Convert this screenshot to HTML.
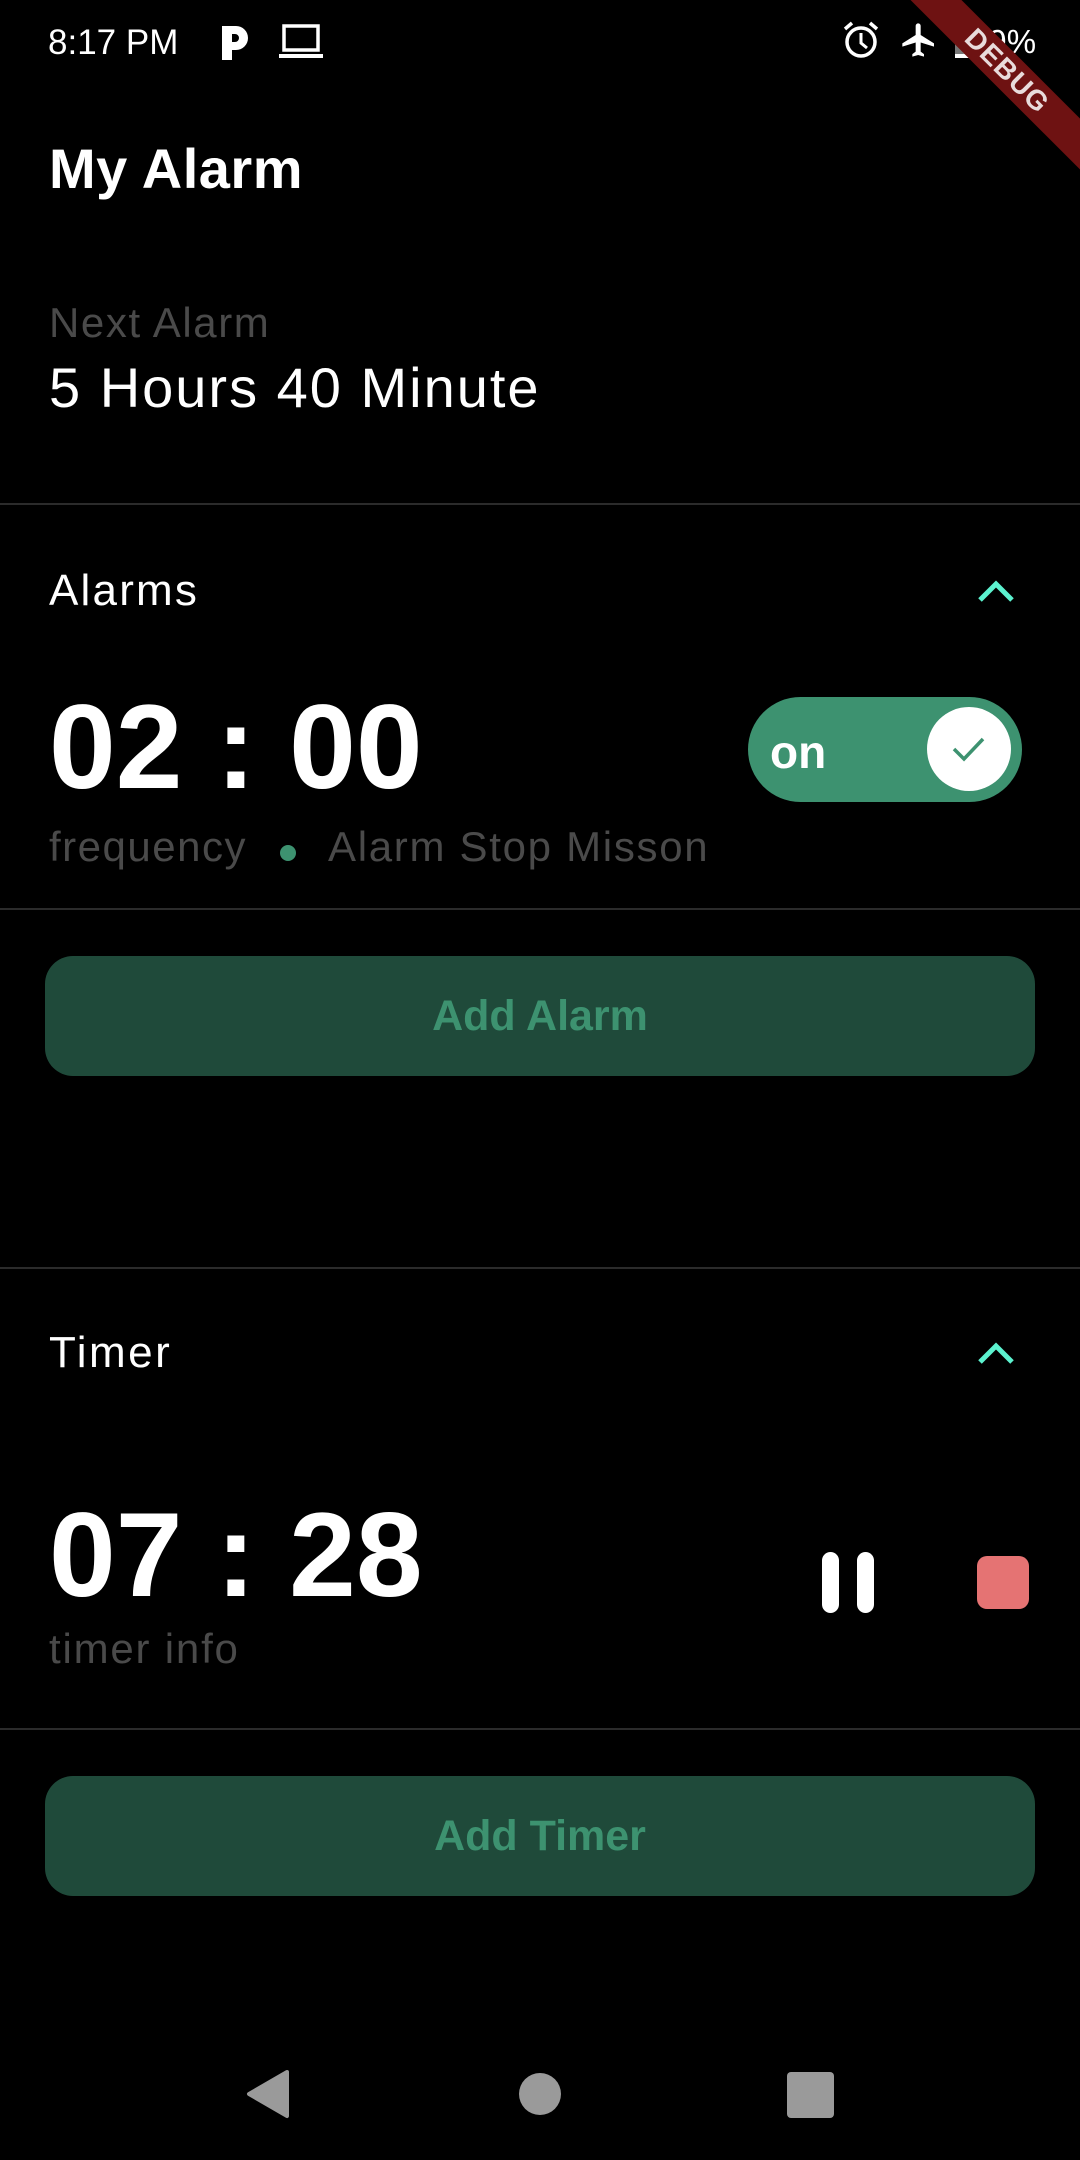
<!DOCTYPE html>
<html><head><meta charset="utf-8"><style>
*{margin:0;padding:0;box-sizing:border-box}
body{width:1080px;height:2160px;background:#000;position:relative;overflow:hidden;font-family:"Liberation Sans",sans-serif;color:#fff}
.t{position:absolute;line-height:1;white-space:nowrap}
.div{position:absolute;left:0;width:1080px;height:2px;background:#2b2b2b}
.btn{position:absolute;left:45px;width:990px;height:120px;background:#1f4a3a;border-radius:28px}
.btxt{position:absolute;left:0;width:1080px;text-align:center;line-height:1;font-weight:bold;font-size:43px;color:#3d9270}
</style></head><body>
<!-- status bar -->
<div class="t" style="left:48px;top:25px;font-size:35px">8:17 PM</div>
<svg style="position:absolute;left:218px;top:24px" width="34" height="38" viewBox="0 0 34 38"><path d="M4 2h14a12 12 0 0 1 0 24h-4v10H4z M14 10v8h3a4 4 0 0 0 0-8z" fill="#fff" fill-rule="evenodd"/></svg>
<svg style="position:absolute;left:278px;top:24px" width="46" height="36" viewBox="0 0 46 36"><rect x="6" y="2" width="34" height="24" fill="none" stroke="#fff" stroke-width="3.5"/><rect x="1" y="30" width="44" height="4" fill="#fff"/></svg>
<svg style="position:absolute;left:842px;top:20px" width="38" height="40" viewBox="0 0 38 40"><circle cx="19" cy="22" r="14" fill="none" stroke="#fff" stroke-width="3.5"/><path d="M19 13v10l6 5" fill="none" stroke="#fff" stroke-width="3"/><path d="M3 9l7-6M35 9l-7-6" stroke="#fff" stroke-width="3.5"/></svg>
<svg style="position:absolute;left:898px;top:20px" width="42" height="40" viewBox="0 0 24 24"><path d="M21 16v-2l-8-5V3.5a1.5 1.5 0 0 0-3 0V9l-8 5v2l8-2.5V19l-2 1.5V22l3.5-1 3.5 1v-1.5L13 19v-5.5z" fill="#fff"/></svg>
<svg style="position:absolute;left:953px;top:20px" width="24" height="40" viewBox="0 0 24 40"><rect x="7" y="0" width="10" height="4" fill="#777"/><rect x="2" y="3" width="20" height="33" fill="#777"/><rect x="2" y="34" width="20" height="4" fill="#fff"/><path d="M14 8l-6 14h5l-3 12 7-16h-5z" fill="#fff"/></svg>
<div class="t" style="left:970px;top:25px;font-size:33px">99%</div>
<div style="position:absolute;left:857px;top:53px;width:300px;height:36px;background:#6e1212;transform:rotate(45deg);text-align:center;line-height:36px;font-weight:bold;font-size:28px;color:rgba(255,255,255,0.85);letter-spacing:1px">DEBUG</div>

<div class="t" style="left:49px;top:141px;font-size:56px;font-weight:bold;letter-spacing:0.5px">My Alarm</div>
<div class="t" style="left:49px;top:302px;font-size:42px;color:#4a4a4a;letter-spacing:1.6px">Next Alarm</div>
<div class="t" style="left:49px;top:360px;font-size:56px;letter-spacing:2px">5 Hours 40 Minute</div>
<div class="div" style="top:503px"></div>

<div class="t" style="left:49px;top:569px;font-size:44px;letter-spacing:2.2px">Alarms</div>
<svg style="position:absolute;left:976px;top:574px" width="40" height="30" viewBox="0 0 40 30"><path d="M4 26L20 10 36 26" fill="none" stroke="#5cf2cf" stroke-width="5"/></svg>
<div class="t" style="left:49px;top:687px;font-size:120px;font-weight:bold">02 : 00</div>
<div style="position:absolute;left:748px;top:697px;width:274px;height:105px;border-radius:53px;background:#3d9270"></div>
<div class="t" style="left:770px;top:729px;font-size:46px;font-weight:bold">on</div>
<div style="position:absolute;left:927px;top:707px;width:84px;height:84px;border-radius:50%;background:#fff"></div>
<svg style="position:absolute;left:950px;top:733px" width="40" height="32" viewBox="0 0 40 32"><path d="M4 16l10 10L33 6" fill="none" stroke="#3d9270" stroke-width="3.5"/></svg>
<div class="t" style="left:49px;top:826px;font-size:42px;color:#4a4a4a;letter-spacing:1.5px">frequency</div>
<div style="position:absolute;left:280px;top:845px;width:16px;height:16px;border-radius:50%;background:#3d9270"></div>
<div class="t" style="left:328px;top:826px;font-size:42px;color:#4a4a4a;letter-spacing:1.7px">Alarm Stop Misson</div>
<div class="div" style="top:908px"></div>
<div class="btn" style="top:956px"></div>
<div class="btxt" style="top:995px">Add Alarm</div>
<div class="div" style="top:1267px"></div>

<div class="t" style="left:49px;top:1331px;font-size:44px;letter-spacing:2.5px">Timer</div>
<svg style="position:absolute;left:976px;top:1336px" width="40" height="30" viewBox="0 0 40 30"><path d="M4 26L20 10 36 26" fill="none" stroke="#5cf2cf" stroke-width="5"/></svg>
<div class="t" style="left:49px;top:1495px;font-size:120px;font-weight:bold">07 : 28</div>
<div class="t" style="left:49px;top:1628px;font-size:42px;color:#4a4a4a;letter-spacing:1.8px">timer info</div>
<div style="position:absolute;left:822px;top:1552px;width:17px;height:61px;border-radius:9px;background:#fff"></div>
<div style="position:absolute;left:857px;top:1552px;width:17px;height:61px;border-radius:9px;background:#fff"></div>
<div style="position:absolute;left:977px;top:1556px;width:52px;height:53px;border-radius:10px;background:#e57373"></div>
<div class="div" style="top:1728px"></div>
<div class="btn" style="top:1776px"></div>
<div class="btxt" style="top:1815px">Add Timer</div>

<svg style="position:absolute;left:244px;top:2068px" width="48" height="52" viewBox="0 0 48 52"><path d="M43 4L5 26l38 22z" fill="#9a9a9a" stroke="#9a9a9a" stroke-width="4" stroke-linejoin="round"/></svg>
<div style="position:absolute;left:519px;top:2073px;width:42px;height:42px;border-radius:50%;background:#9a9a9a"></div>
<div style="position:absolute;left:787px;top:2072px;width:47px;height:46px;border-radius:4px;background:#9a9a9a"></div>
</body></html>
